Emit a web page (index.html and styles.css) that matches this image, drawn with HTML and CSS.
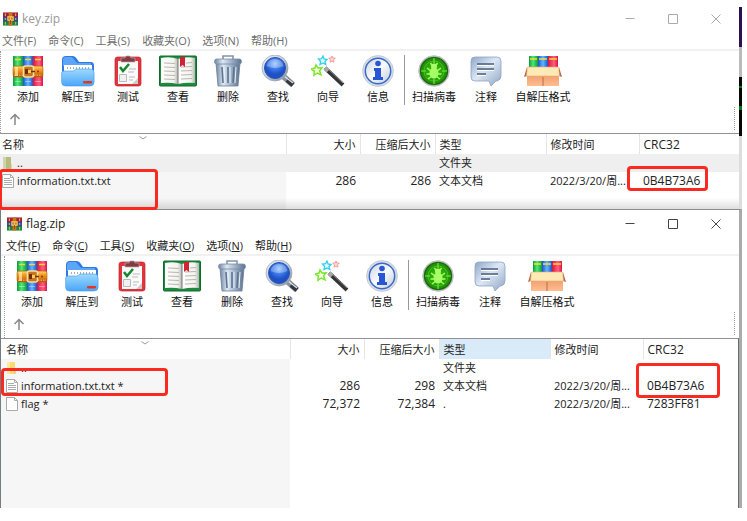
FILE: index.html
```html
<!DOCTYPE html>
<html lang="zh-CN">
<head>
<meta charset="utf-8">
<title>flag.zip</title>
<link rel="stylesheet" href="styles.css">
</head>
<body>
<svg class="sprite" width="0" height="0" aria-hidden="true">
  <defs>
    <linearGradient id="gGreen"><stop offset="0" stop-color="#0d9a3a"/><stop offset=".45" stop-color="#4dea76"/><stop offset="1" stop-color="#0d9a3a"/></linearGradient>
    <linearGradient id="gBlue"><stop offset="0" stop-color="#1c53cc"/><stop offset=".5" stop-color="#62b6ff"/><stop offset="1" stop-color="#1c53cc"/></linearGradient>
    <linearGradient id="gRed"><stop offset="0" stop-color="#dc143c"/><stop offset=".6" stop-color="#ff5f80"/><stop offset="1" stop-color="#d8144a"/></linearGradient>
    <linearGradient id="gBelt" x2="0" y2="1"><stop offset="0" stop-color="#ffc34c"/><stop offset=".5" stop-color="#ed8b18"/><stop offset="1" stop-color="#b45408"/></linearGradient>
    <linearGradient id="gFolder" x2="0" y2="1"><stop offset="0" stop-color="#9cdaff"/><stop offset="1" stop-color="#4aa5f8"/></linearGradient>
    <linearGradient id="gSteel"><stop offset="0" stop-color="#6f86a4"/><stop offset=".3" stop-color="#dbe7f4"/><stop offset=".6" stop-color="#a2b6cd"/><stop offset="1" stop-color="#5b7190"/></linearGradient>
    <linearGradient id="gPage"><stop offset="0" stop-color="#fff"/><stop offset=".75" stop-color="#f2f2ee"/><stop offset="1" stop-color="#b4b4b0"/></linearGradient>
    <radialGradient id="gLens" cy=".3"><stop offset="0" stop-color="#8fc0ff"/><stop offset=".5" stop-color="#3e7bea"/><stop offset="1" stop-color="#1f50c4"/></radialGradient>
    <linearGradient id="gRing" x2="1" y2="1"><stop offset="0" stop-color="#f2f5fa"/><stop offset=".5" stop-color="#c0cad8"/><stop offset="1" stop-color="#7b8798"/></linearGradient>
    <linearGradient id="gDisc" x2="1" y2="1"><stop offset="0" stop-color="#cdd6e2"/><stop offset=".5" stop-color="#f8fafc"/><stop offset="1" stop-color="#c0cad8"/></linearGradient>
    <radialGradient id="gScan"><stop offset="0" stop-color="#3fc810"/><stop offset="1" stop-color="#1c8c02"/></radialGradient>
    <linearGradient id="gNote" x2="1" y2="1"><stop offset="0" stop-color="#8ea6c8"/><stop offset=".45" stop-color="#dce7f5"/><stop offset="1" stop-color="#8fa5c4"/></linearGradient>
    <linearGradient id="gBox" x2="0" y2="1"><stop offset="0" stop-color="#e99260"/><stop offset="1" stop-color="#ffbd90"/></linearGradient>
  </defs>
  <symbol id="add" viewBox="0 0 32 32">
    <path fill="url(#gGreen)" d="M1 1h10v30H1z"/><path fill="url(#gBlue)" d="M11 1h10v30H11z"/><path fill="url(#gRed)" d="M21 1h10v30H21z"/>
    <path stroke="#ffd33a" stroke-width="1.4" d="M3 4.500h6m4 0h6m4 0h6"/>
    <path stroke="#fff" stroke-opacity=".4" d="M3 26.500h6m4 0h6m4 0h6"/>
    <rect x="1" y="11" width="30" height="11" rx="2" fill="url(#gBelt)" stroke="#b9640c" stroke-width=".6"/>
    <path stroke="#ffe18a" stroke-width=".7" stroke-dasharray="1.500 1" d="M2 12.800h28M2 20.200h28"/>
    <path fill="#fff1a8" fill-opacity=".7" d="M3 12h3v9H3z"/>
    <rect x="11.500" y="11" width="10" height="11" rx="2" fill="#c87420" stroke="#f9e0a0" stroke-width="1.500"/>
    <path fill="#6b2f0a" d="M13 14h3v5h-3zm5 1.700h5v1.600h-5z"/><path fill="#ffca55" d="M16 15h3v3h-3z"/><circle cx="26" cy="16.500" r=".9" fill="#71310a"/>
  </symbol>
  <symbol id="extract" viewBox="0 0 34 32">
    <path fill="#2f78e6" d="M1 27V5q0-4 4-4h7q2 0 4 3l2 3h12q3 0 3 4v16z"/><path fill="#5ca6f8" d="M2 8V5q0-3 3-3h6l5 6h14v3H2z"/>
    <path fill="#fff" d="M3 10h28v12H3z"/><path stroke="#8294a9" stroke-width="1.400" stroke-dasharray="1 2" d="M6 13h23"/>
    <path fill="url(#gFolder)" stroke="#4698e8" stroke-width=".6" d="M.6 18q0-2 3-2h8q2 0 3-2h15q3.500 0 3.500 4v9q0 4-4 4H4.500Q.6 31 .6 27z"/>
    <rect x="22" y="26" width="9" height="2.400" rx=".8" fill="#e63520"/>
  </symbol>
  <symbol id="test" viewBox="0 0 28 32">
    <rect x="1" y="2" width="26" height="29" rx="2.500" fill="#e0353c" stroke="#b82630" stroke-width=".7"/><path fill="#fafafa" d="M4 6h20v23H4z"/><path fill="#ccc" d="m24 23-6 6h6z"/>
    <path fill="#7d3d44" stroke="#c9a0a3" stroke-width=".7" d="M7 3h4l1-2h4l1 2h4v4H7z"/>
    <path fill="none" stroke="#16882c" stroke-width="2.500" d="m6 12 3 4 6-7"/><path stroke="#bbb" d="M15 14h7m-8 3h6m-5 5h6m-6 3h4"/><path fill="#f1f1f1" stroke="#bbb" d="M5.500 19.500h7v7h-7z"/>
  </symbol>
  <symbol id="view" viewBox="0 0 38 32">
    <rect x=".5" y="1" width="37" height="30" rx="1" fill="#1d8a40" stroke="#0f6a2c"/><path fill="url(#gPage)" d="M2 3q9-2 17 1v25q-8-2-17-1z"/><path fill="url(#gPage)" d="M36 3q-9-2-17 1v25q8-2 17-1z"/>
    <path stroke="#b8b6ae" stroke-width="1" d="m5 8 11 .5M5 12l11 .5M5 16l11 .5M5 20l11 .5M5 24l11 .5M22 12l11-.5M27 8l6-.5M22 16l11-.5M22 20l11-.5M22 24l11-.5"/><path stroke="#777" d="M19 4v25"/><path fill="#d12331" d="M21 2h5v10l-2.500-2L21 12z"/>
  </symbol>
  <symbol id="delete" viewBox="0 0 28 32">
    <path fill="none" stroke="#8494a8" stroke-width="1.600" d="M9 4V1h10v3"/><path fill="url(#gSteel)" stroke="#6d7e94" stroke-width=".8" d="M2 8h24l-2 23H4z"/><path stroke="#5f748f" stroke-width="1.600" d="m8 12 1 16m5-16v16m6-16-1 16"/><path stroke="#e9f1f8" d="m10 12 1 16m5-16v16m6-16-1 16"/>
    <rect x=".6" y="4" width="26.800" height="5" rx="2" fill="url(#gSteel)" stroke="#7a8ba1" stroke-width=".8"/>
  </symbol>
  <symbol id="find" viewBox="0 0 34 32">
    <path stroke="#87919e" stroke-width="6" d="m22 21 10 9"/><path stroke="#33373c" stroke-width="4.500" d="m26 25 6 5"/><path stroke="#e1e5ea" stroke-width="1.200" d="m23 21 9 7"/>
    <circle cx="14" cy="13" r="13" fill="url(#gRing)" stroke="#98a4b4" stroke-width=".7"/><circle cx="14" cy="13" r="10.500" fill="url(#gLens)" stroke="#2455b8"/><path fill="#fff" fill-opacity=".3" d="M5.500 11Q7 4 14 4t8.500 7Q14 15 5.500 11z"/>
  </symbol>
  <symbol id="wizard" viewBox="0 0 34 32">
    <path stroke="#333537" stroke-width="4" d="m14 13 18 17"/><path stroke="#888" d="m16 13 16 15"/><path stroke="#a7a7a7" stroke-width="4" d="m14 13 3 3"/>
    <path fill="#f5ffdf" stroke="#7ae62b" stroke-width="1.500" d="m5 10 2 3 4-.2-2.400 3 1.400 4L6.300 18 3 20.200 3.300 16 0 14l4-1z"/><path fill="#e4fdff" stroke="#31cef5" stroke-width="1.300" d="m12 1 1 3 3 .5-2 2 .8 3L12 8l-3 1.500.6-3L7.500 4l3-.3z"/><path fill="#ffd9d9" stroke="#f49a9d" d="m21 1 .8 2 2.500.2-1.800 1.600.5 2.400-2-1.200-2 1.200.5-2.400-1.800-1.600 2.500-.2z"/>
  </symbol>
  <symbol id="info" viewBox="0 0 32 32">
    <circle cx="16" cy="16" r="15.400" fill="#d9e0e9" stroke="#b9c2cc" stroke-width=".8"/><circle cx="16" cy="16" r="12.700" fill="url(#gDisc)" stroke="#3a68c8" stroke-width="1.500"/><circle cx="16" cy="8.500" r="2.800" fill="#2856d4"/><path fill="#2856d4" d="M12 13h7v9h2v3h-10v-3h2v-6h-1z"/>
  </symbol>
  <symbol id="scan" viewBox="0 0 32 32">
    <circle cx="16" cy="16" r="15.300" fill="#a3aea4" stroke="#c1c6c2"/><circle cx="16" cy="16" r="13.500" fill="url(#gScan)" stroke="#1a6412" stroke-width="1.200"/><circle cx="16" cy="16" r="10" fill="none" stroke="#55c82e" stroke-width=".7"/><path stroke="#74ed43" stroke-width="1.100" d="M16 3v5m0 16v5M3 16h5m16 0h5"/>
    <ellipse cx="16" cy="18" rx="4.500" ry="5.500" fill="#a6ff66"/><circle cx="16" cy="11.500" r="3" fill="#a6ff66"/><path fill="none" stroke="#a6ff66" stroke-width="1.500" d="m12.500 8 2 3m5-3-2 3M9 13l4 3m10-3-4 3M8.500 19h15M10 24l4-3m8 3-4-3"/>
  </symbol>
  <symbol id="comment" viewBox="0 0 32 32">
    <path fill="url(#gNote)" stroke="#8ea3c0" stroke-width=".8" d="M5 2h22q4 0 4 4v15q0 4-4 5h-1l-5 5-2-5H5q-4 0-4-4V6q0-4 4-4z"/><path stroke="#fff" stroke-width="1" d="M7 10.500h17M7 15.500h17M7 20.500h9"/><path stroke="#4b5e7b" stroke-width="1.500" d="M7 9h17M7 14h17M7 19h9"/>
  </symbol>
  <symbol id="sfx" viewBox="0 0 38 32">
    <path fill="url(#gGreen)" d="M5 1h9v13H5z"/><path fill="url(#gBlue)" d="M14 1h10v13H14z"/><path fill="url(#gRed)" d="M24 1h10v13H24z"/><path stroke="#ffda2c" stroke-width="1.500" d="M6 4h7m2 0h8m2 0h8"/>
    <path fill="url(#gBox)" d="M3 15h32v16H3z"/><path stroke="#b56e48" d="M19 22v9"/><path fill="#b56a48" d="m3 12-3 10 3-1zm32 0 3 10-3-1z"/><path fill="#ffeab6" stroke="#e7ad76" stroke-width=".6" d="M3.500 12h31l1 9h-33z"/>
  </symbol>
  <symbol id="rar" viewBox="0 0 16 14">
    <path fill="#a3213a" d="M0 0h16v5H0z"/><path fill="#2a50b8" d="M0 5h16v4H0z"/><path fill="#1b8546" d="M0 9h16v5H0z"/><path fill="#43275b" d="M0 4.500h16v1H0zm0 4h16v1H0z"/><path stroke="#e6c74a" d="M2.500 1v3m0 2v2m0 2v3M13.500 1v3m0 2v2m0 2v3"/><path fill="#c6771d" d="M6 0h4v14H6z"/><path fill="#ffc050" d="M4.500 4h7v5h-7z"/><path fill="#8a4a14" d="M6 5.500h1v2H6zm3 0h1v2H9zM7.500 8h1v4h-1z"/>
  </symbol>
  <symbol id="up" viewBox="0 0 12 12"><path fill="none" stroke="#888" stroke-width="1.500" d="M6 12V1.500M1.500 6 6 1.500 10.500 6"/></symbol>
  <symbol id="min" viewBox="0 0 10 10"><path stroke="currentColor" d="M.5 4.500h9"/></symbol>
  <symbol id="max" viewBox="0 0 10 10"><path fill="none" stroke="currentColor" d="M.5.5h9v9h-9z"/></symbol>
  <symbol id="close" viewBox="0 0 10 10"><path stroke="currentColor" d="m.5.5 9 9m0-9-9 9"/></symbol>
  <symbol id="sort" viewBox="0 0 8 4"><path fill="none" stroke="#999" d="m.5.5 3.500 2.500L7.500.5"/></symbol>
  <symbol id="doc" viewBox="0 0 12 14"><path fill="#fff" stroke="#aaa" d="M.5.5h8l3 3v10H.5z"/><path fill="none" stroke="#aaa" d="M8.500.5v3h3"/></symbol>
  <symbol id="txt" viewBox="0 0 12 14"><path fill="#fff" stroke="#aaa" d="M.5.5h8l3 3v10H.5z"/><path fill="none" stroke="#aaa" d="M8.500.5v3h3M2 4.500h6m-6 2h8m-8 2h8m-8 2h8"/></symbol>
  <symbol id="folder" viewBox="0 0 12 14"><path fill="currentColor" d="M1 1h8v12H1z"/><path fill="#fff" fill-opacity=".35" d="M1 1h3v12H1z"/><path fill="#d9b95c" fill-opacity=".5" d="M8 8h2v5H8z"/></symbol>
</svg>

<main class="desktop">
  <section class="window key">
    <header class="title">
      <svg class="logo"><use href="#rar"/></svg><h1>key.zip</h1>
      <button aria-label="最小化"><svg><use href="#min"/></svg></button><button aria-label="最大化"><svg><use href="#max"/></svg></button><button aria-label="关闭"><svg><use href="#close"/></svg></button>
    </header>
    <nav class="menu"><button>文件(F)</button><button>命令(C)</button><button>工具(S)</button><button>收藏夹(O)</button><button>选项(N)</button><button>帮助(H)</button></nav>
    <div class="tools">
      <div class="toolbar">
        <button><svg><use href="#add"/></svg>添加</button><button><svg><use href="#extract"/></svg>解压到</button><button><svg><use href="#test"/></svg>测试</button><button><svg class="wide"><use href="#view"/></svg>查看</button><button><svg><use href="#delete"/></svg>删除</button><button><svg><use href="#find"/></svg>查找</button><button><svg><use href="#wizard"/></svg>向导</button><button><svg><use href="#info"/></svg>信息</button>
        <span class="rule"></span>
        <button class="scan"><svg><use href="#scan"/></svg>扫描病毒</button><button class="note"><svg><use href="#comment"/></svg>注释</button><button class="sfx"><svg class="wide"><use href="#sfx"/></svg>自解压格式</button>
      </div>
      <div class="path"><button aria-label="向上"><svg><use href="#up"/></svg></button><span class="grip"></span></div>
    </div>
    <div class="list">
      <table>
        <colgroup><col class="c-name"><col class="c-size"><col class="c-packed"><col class="c-type"><col class="c-date"><col></colgroup>
        <thead><tr><th>名称<svg class="sort"><use href="#sort"/></svg></th><th class="right">大小</th><th class="right">压缩后大小</th><th>类型</th><th>修改时间</th><th class="latin">CRC32</th></tr></thead>
        <tbody>
          <tr class="selected"><td><span class="file"><svg class="olive"><use href="#folder"/></svg>..</span></td><td></td><td></td><td>文件夹</td><td></td><td></td></tr>
          <tr><td><span class="file"><svg><use href="#txt"/></svg>information.txt.txt</span></td><td class="right latin">286</td><td class="right latin">286</td><td>文本文档</td><td>2022/3/20/周...</td><td class="latin">0B4B73A6</td></tr>
        </tbody>
      </table>
    </div>
    <span class="mark mark-name"></span><span class="mark mark-crc"></span>
  </section>

  <section class="window flag">
    <header class="title">
      <svg class="logo"><use href="#rar"/></svg><h1>flag.zip</h1>
      <button aria-label="最小化"><svg><use href="#min"/></svg></button><button aria-label="最大化"><svg><use href="#max"/></svg></button><button aria-label="关闭"><svg><use href="#close"/></svg></button>
    </header>
    <nav class="menu"><button>文件(<u>F</u>)</button><button>命令(<u>C</u>)</button><button>工具(<u>S</u>)</button><button>收藏夹(<u>O</u>)</button><button>选项(<u>N</u>)</button><button>帮助(<u>H</u>)</button></nav>
    <div class="tools">
      <div class="toolbar">
        <button><svg><use href="#add"/></svg>添加</button><button><svg><use href="#extract"/></svg>解压到</button><button><svg><use href="#test"/></svg>测试</button><button><svg class="wide"><use href="#view"/></svg>查看</button><button><svg><use href="#delete"/></svg>删除</button><button><svg><use href="#find"/></svg>查找</button><button><svg><use href="#wizard"/></svg>向导</button><button><svg><use href="#info"/></svg>信息</button>
        <span class="rule"></span>
        <button class="scan"><svg><use href="#scan"/></svg>扫描病毒</button><button class="note"><svg><use href="#comment"/></svg>注释</button><button class="sfx"><svg class="wide"><use href="#sfx"/></svg>自解压格式</button>
      </div>
      <div class="path"><button aria-label="向上"><svg><use href="#up"/></svg></button><span class="grip"></span></div>
    </div>
    <div class="list">
      <table>
        <colgroup><col class="c-name"><col class="c-size"><col class="c-packed"><col class="c-type"><col class="c-date"><col></colgroup>
        <thead><tr><th>名称<svg class="sort"><use href="#sort"/></svg></th><th class="right">大小</th><th class="right">压缩后大小</th><th class="hover">类型</th><th>修改时间</th><th class="latin">CRC32</th></tr></thead>
        <tbody>
          <tr><td><span class="file"><svg class="yellow"><use href="#folder"/></svg>..</span></td><td></td><td></td><td>文件夹</td><td></td><td></td></tr>
          <tr><td><span class="file"><svg><use href="#txt"/></svg>information.txt.txt *</span></td><td class="right latin">286</td><td class="right latin">298</td><td>文本文档</td><td>2022/3/20/周...</td><td class="latin">0B4B73A6</td></tr>
          <tr><td><span class="file"><svg><use href="#doc"/></svg>flag *</span></td><td class="right latin">72,372</td><td class="right latin">72,384</td><td>.</td><td>2022/3/20/周...</td><td class="latin">7283FF81</td></tr>
        </tbody>
      </table>
    </div>
    <span class="mark mark-name"></span><span class="mark mark-crc"></span>
  </section>
</main>
</body>
</html>
```
FILE: styles.css
```css
* { box-sizing: border-box; }
body { margin: 0; background: #fff; color: #222; font: 11px/16px "Open Sans", "Noto Sans CJK SC", sans-serif; }
button { margin: 0; padding: 0; border: 0; background: none; color: inherit; font: inherit; }
svg { display: block; overflow: visible; }
.sprite { position: absolute; }

.desktop { display: flex; flex-direction: column; min-height: 100vh; padding: 7px 5px 13px 0; }
.window { position: relative; display: flex; flex-direction: column; background: #fff; border-right: 3px solid #aaa; --inset: 0px; }
.key { border-image: linear-gradient(#2a1050 40px, #bbb 40px 70px, #050805 70px 79px, #087515 79px 81px, #050805 81px 99px, #087515 99px 103px, #050805 103px 129px, #ddd 129px) 0 3 0 0; }
.flag { flex: 1; border-top: 1px solid #8b8b8f; border-left: 1px solid #777b82; --inset: 3px; }

.title { display: flex; align-items: center; height: 28px; padding: 0 18px 1px calc(var(--inset) + 3px); }
.key .title { height: 26px; padding-bottom: 3px; color: #999; }
.title h1 { flex: 1; margin: 0; font-size: 12px; font-weight: 400; }
.logo { width: 15px; height: 14px; margin-right: 4px; }
.title button { margin-left: 33px; color: #444; }
.key .title button { color: #aaa; }
.title button svg { width: 10px; height: 10px; }

.menu { display: flex; gap: 12px; height: 18px; padding-left: calc(var(--inset) + 2px); border-bottom: 2px solid #f1f1f1; }
.menu button { white-space: nowrap; }
.key .menu { color: #6d6d6d; }

.tools { margin-left: var(--inset); border-left: 1px dotted #999; }
.toolbar { display: flex; height: 55px; padding: 4px 0 0 2px; color: #111; }
.toolbar button { display: flex; flex-direction: column; align-items: center; gap: 2px; width: 50px; white-space: nowrap; }
.toolbar svg { width: 34px; height: 32px; }
.toolbar .wide { width: 38px; }
.rule { width: 1px; height: 50px; margin-left: 1px; background: #999; }
.toolbar .scan { width: 58px; }
.toolbar .note { width: 46px; }
.toolbar .sfx { width: 68px; }
.path { display: flex; align-items: center; justify-content: space-between; height: 27px; padding: 0 4px 2px 8px; }
.path svg { width: 12px; height: 12px; }
.grip { height: 23px; border-left: 1px dotted #999; }

.list { flex: 1; border-top: 1px solid #8f9298; background: linear-gradient(90deg, #f6f6f6 calc(var(--inset) + 286px), #fff calc(var(--inset) + 286px)); }
.key .list { min-height: 76px; background: linear-gradient(transparent 64px, #0002), linear-gradient(90deg, #f6f6f6 286px, #fff 286px); }
.flag .list { border-right: 1px solid #656970; }
table { width: 100%; border-collapse: collapse; table-layout: fixed; }
.c-name { width: 286px; }
.flag .c-name { width: 289px; }
.c-size { width: 74px; }
.c-packed { width: 75px; }
.c-type { width: 111px; }
.c-date { width: 93px; }
th, td { padding: 0 4px; height: 18px; text-align: left; font-weight: 400; white-space: nowrap; vertical-align: middle; }
th { position: relative; height: 20px; padding-top: 2px; background: #fff; border-right: 1px solid #e5e5e5; }
th:last-child { border-right: 0; }
th:first-child, td:first-child { padding-left: calc(var(--inset) + 2px); }
.right { text-align: right; }
.latin { font-size: 12px; }
.hover { background: #d9ebf9; }
.selected { background: #efefef; }
.sort { position: absolute; left: calc(50% - 4px); top: 2px; width: 8px; height: 4px; }
.file { display: flex; align-items: center; gap: 3px; }
.file svg { width: 12px; height: 14px; }
.olive { color: #b5bd83; }
.yellow { color: #ffda73; }

.mark { position: absolute; z-index: 1; border: 3px solid #fa2a20; border-radius: 4px; pointer-events: none; }
.key .mark-name { left: -1px; top: 162px; width: 159px; height: 41px; }
.key .mark-crc { left: 627px; top: 159px; width: 81px; height: 25px; }
.flag .mark-name { left: 0; top: 158px; width: 167px; height: 28px; }
.flag .mark-crc { left: 635px; top: 153px; width: 84px; height: 35px; }
```
